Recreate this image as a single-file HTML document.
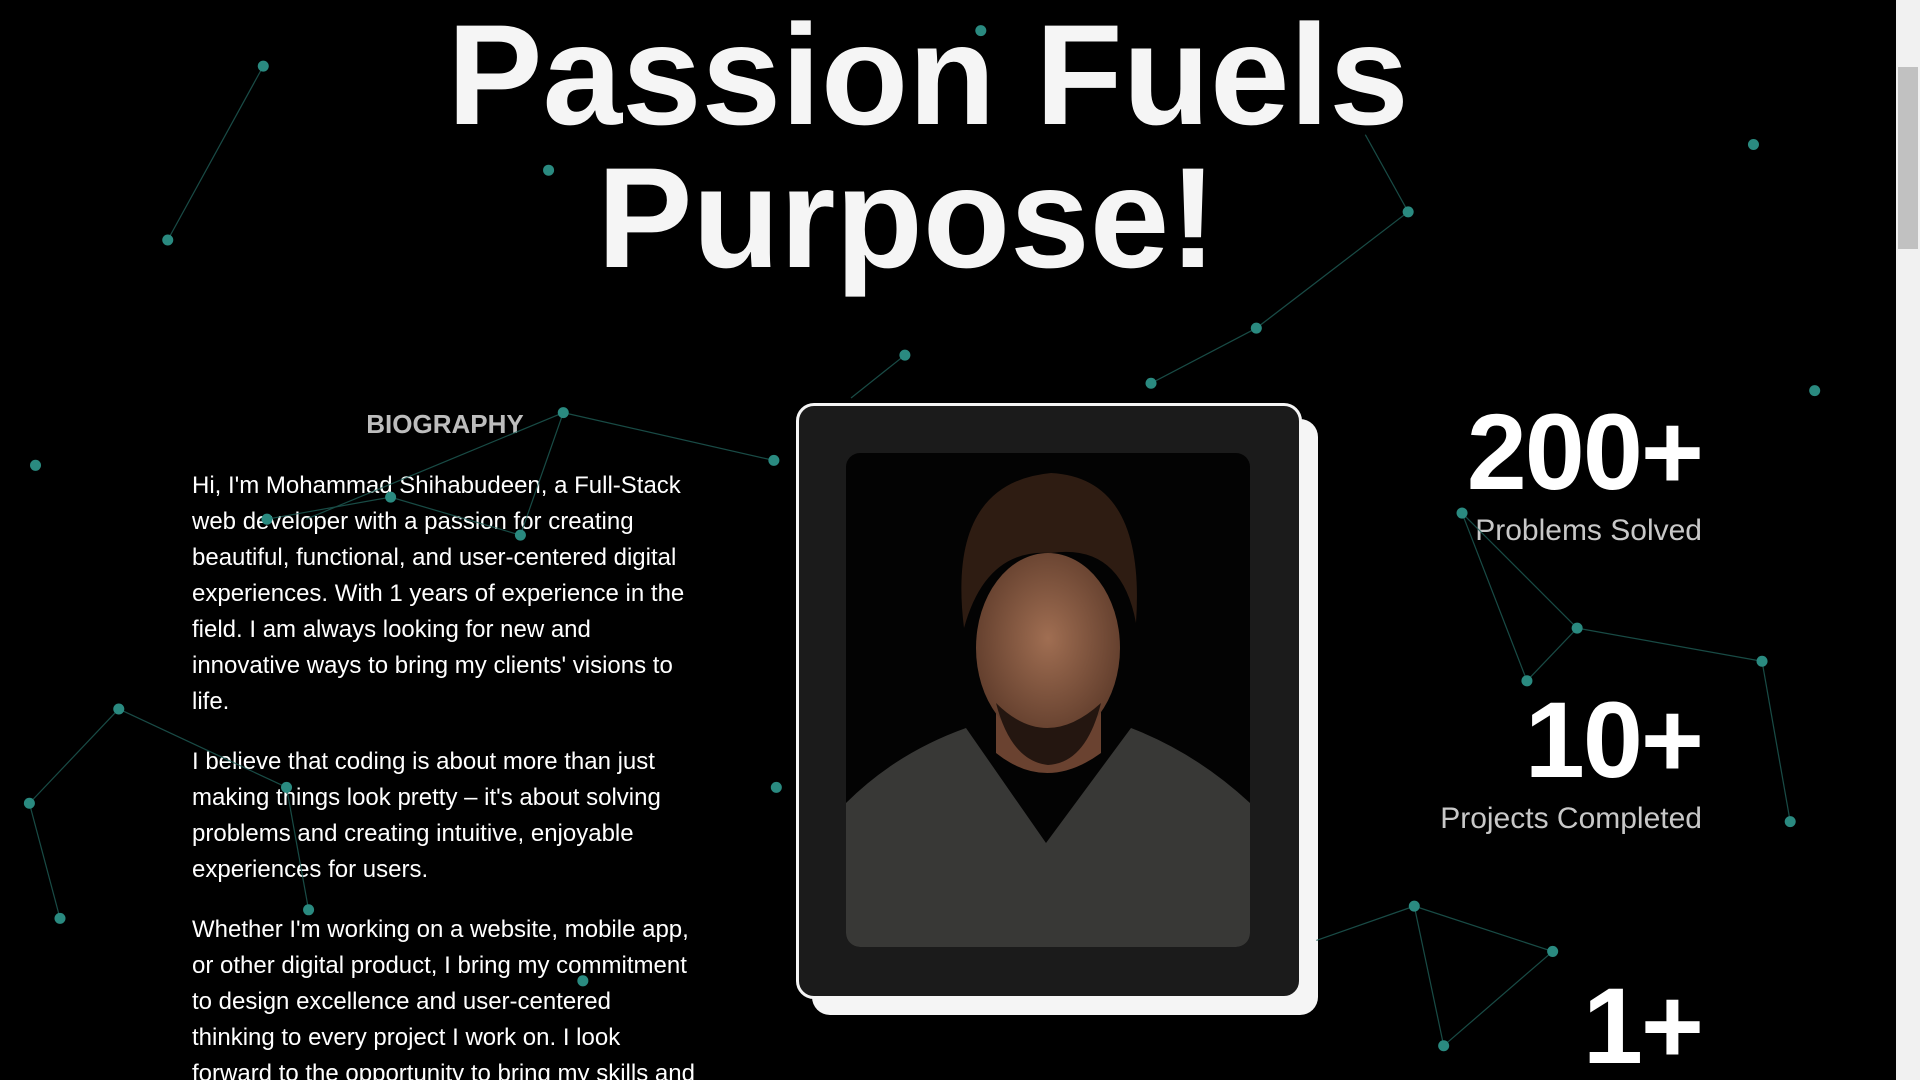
<!DOCTYPE html>
<html><head><meta charset="utf-8"><style>
html,body{margin:0;padding:0;background:#000;width:1920px;height:1080px;overflow:hidden;font-family:"Liberation Sans",Arial,sans-serif;}
#w{position:relative;width:1920px;height:1080px;overflow:hidden;background:#000}
.a{position:absolute;}
h1{position:absolute;left:0;width:1856px;top:0;margin:0;text-align:center;color:#f5f5f5;font-size:143px;line-height:143px;font-weight:bold;padding-top:4px}
h1 span{position:relative;left:-21px}
.bh{left:192px;width:506px;top:409px;text-align:center;color:#bdbdbd;font-weight:bold;font-size:26px;}
.bio{left:192px;width:505px;top:468px;color:#fff;font-size:24px;line-height:36px;}
.bio p{margin:0 0 24px 0}
.frame{left:796px;top:403px;width:500px;height:590px;background:#1b1b1b;border:3px solid #f5f5f5;border-radius:18px;box-shadow:16px 16px 0 #f5f5f5;}
.stat{right:218px;text-align:right;color:#fff;}
.num{font-size:108px;font-weight:bold;line-height:1;letter-spacing:-2px}
.lbl{font-size:30px;color:#c8c8c8;margin-top:8px}
.sb{left:1896px;top:0;width:24px;height:1080px;background:#f1f1f1}
.th{left:1898px;top:67px;width:20px;height:182px;background:#c1c1c1}
</style></head><body><div id="w">
<h1>Passion Fuels<br><span>Purpose!</span></h1>
<div class="a bh">BIOGRAPHY</div>
<div class="a bio">
<p>Hi, I'm Mohammad Shihabudeen, a Full-Stack web developer with a passion for creating beautiful, functional, and user-centered digital experiences. With 1 years of experience in the field. I am always looking for new and innovative ways to bring my clients' visions to life.</p>
<p>I believe that coding is about more than just making things look pretty – it's about solving problems and creating intuitive, enjoyable experiences for users.</p>
<p>Whether I'm working on a website, mobile app, or other digital product, I bring my commitment to design excellence and user-centered thinking to every project I work on. I look forward to the opportunity to bring my skills and passion to your next project.</p>
</div>
<div class="a frame">
<svg class="a" style="left:47px;top:47px" width="404" height="494" viewBox="0 0 404 494">
<defs><clipPath id="c"><rect width="404" height="494" rx="14"/></clipPath>
<radialGradient id="f" cx="0.5" cy="0.45" r="0.6"><stop offset="0" stop-color="#a06e52"/><stop offset="1" stop-color="#5a3828"/></radialGradient></defs>
<g clip-path="url(#c)">
<rect width="404" height="494" fill="#030303"/>
<path d="M0 494 L0 350 Q50 300 120 275 L200 390 L285 275 Q350 300 404 350 L404 494 Z" fill="#383836"/>
<path d="M150 250 L150 300 Q200 340 255 300 L255 250 Z" fill="#6a4230"/>
<ellipse cx="202" cy="195" rx="72" ry="95" fill="url(#f)"/>
<path d="M118 175 Q100 30 205 20 Q300 25 290 170 Q275 90 205 100 Q140 95 118 175 Z" fill="#2e1c12"/>
<path d="M150 250 Q200 300 255 250 Q240 310 202 312 Q165 308 150 250Z" fill="#241610"/>
</g></svg>
</div>
<div class="a stat" style="top:398px"><div class="num">200+</div><div class="lbl">Problems Solved</div></div>
<div class="a stat" style="top:686px"><div class="num">10+</div><div class="lbl">Projects Completed</div></div>
<div class="a stat" style="top:972px"><div class="num">1+</div></div>
<svg class="a" style="left:0;top:0" width="1920" height="1080" viewBox="0 0 1568 882">
<g stroke="#1f5e57" stroke-width="1" fill="none" opacity="0.8">
<line x1="215" y1="54" x2="137" y2="196"/>
<line x1="1115" y1="110" x2="1150" y2="173"/><line x1="1150" y1="173" x2="1026" y2="268"/><line x1="1026" y1="268" x2="940" y2="313"/>
<line x1="739" y1="290" x2="695" y2="325"/>
<line x1="460" y1="337" x2="425" y2="437"/><line x1="460" y1="337" x2="250" y2="424"/><line x1="319" y1="406" x2="218" y2="424"/><line x1="319" y1="406" x2="425" y2="437"/><line x1="460" y1="337" x2="632" y2="376"/>
<line x1="1194" y1="419" x2="1288" y2="513"/><line x1="1194" y1="419" x2="1247" y2="556"/><line x1="1288" y1="513" x2="1247" y2="556"/><line x1="1288" y1="513" x2="1439" y2="540"/><line x1="1439" y1="540" x2="1462" y2="671"/>
<line x1="97" y1="579" x2="24" y2="656"/><line x1="24" y1="656" x2="49" y2="750"/><line x1="97" y1="579" x2="234" y2="643"/><line x1="234" y1="643" x2="252" y2="743"/>
<line x1="1155" y1="740" x2="1268" y2="777"/><line x1="1155" y1="740" x2="1179" y2="854"/><line x1="1268" y1="777" x2="1179" y2="854"/><line x1="1155" y1="740" x2="1075" y2="768"/>
</g>
<g fill="#2a8a80">
<circle cx="215" cy="54" r="4.5"/><circle cx="137" cy="196" r="4.5"/><circle cx="801" cy="25" r="4.5"/><circle cx="448" cy="139" r="4.5"/><circle cx="1432" cy="118" r="4.5"/><circle cx="1150" cy="173" r="4.5"/><circle cx="1026" cy="268" r="4.5"/><circle cx="940" cy="313" r="4.5"/><circle cx="739" cy="290" r="4.5"/><circle cx="1482" cy="319" r="4.5"/><circle cx="460" cy="337" r="4.5"/><circle cx="319" cy="406" r="4.5"/><circle cx="218" cy="424" r="4.5"/><circle cx="425" cy="437" r="4.5"/><circle cx="29" cy="380" r="4.5"/><circle cx="632" cy="376" r="4.5"/><circle cx="1194" cy="419" r="4.5"/><circle cx="1288" cy="513" r="4.5"/><circle cx="1247" cy="556" r="4.5"/><circle cx="1439" cy="540" r="4.5"/><circle cx="1462" cy="671" r="4.5"/><circle cx="97" cy="579" r="4.5"/><circle cx="24" cy="656" r="4.5"/><circle cx="49" cy="750" r="4.5"/><circle cx="234" cy="643" r="4.5"/><circle cx="252" cy="743" r="4.5"/><circle cx="634" cy="643" r="4.5"/><circle cx="1155" cy="740" r="4.5"/><circle cx="1268" cy="777" r="4.5"/><circle cx="1179" cy="854" r="4.5"/><circle cx="476" cy="801" r="4.5"/>
</g></svg>
<div class="a sb"></div><div class="a th"></div>
</div></body></html>
